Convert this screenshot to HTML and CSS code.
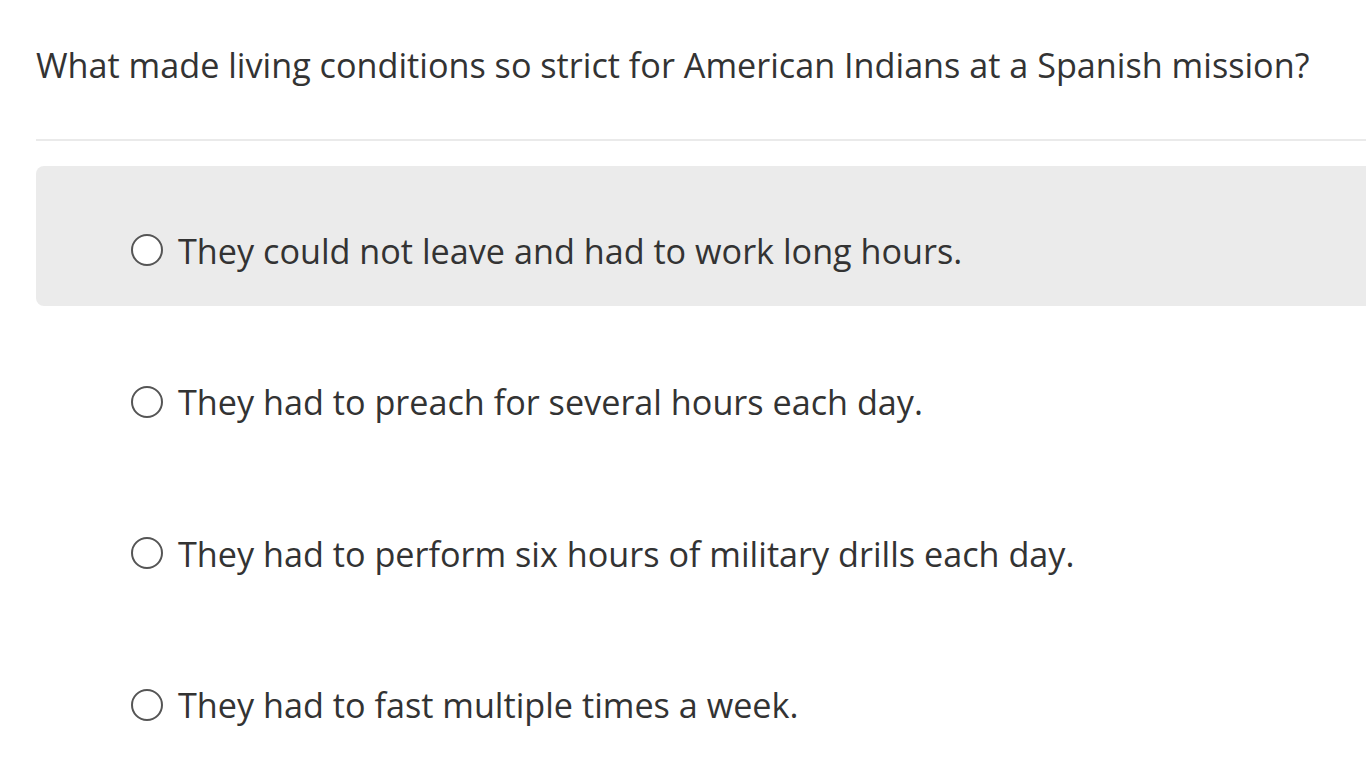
FILE: index.html
```html
<!DOCTYPE html>
<html>
<head>
<meta charset="utf-8">
<link rel="stylesheet" href="styles.css">
</head>
<body>
<div class="page">
  <div class="question">What made living conditions so strict for American Indians at a Spanish mission?</div>
  <div class="options">
    <label class="option active"><span class="radio"></span><span class="text">They could not leave and had to work long hours.</span></label>
    <label class="option"><span class="radio"></span><span class="text">They had to preach for several hours each day.</span></label>
    <label class="option"><span class="radio"></span><span class="text">They had to perform six hours of military drills each day.</span></label>
    <label class="option"><span class="radio"></span><span class="text">They had to fast multiple times a week.</span></label>
  </div>
</div>
</body>
</html>
```
FILE: styles.css
```css
html, body {
  margin: 0;
  padding: 0;
  background: #ffffff;
  overflow: hidden;
}
.page {
  padding-left: 36px;
  font-family: "Open Sans", sans-serif;
  color: #333333;
}
.question {
  font-size: 34.2px;
  line-height: 46px;
  padding-top: 42px;
  padding-bottom: 51px;
  border-bottom: 2px solid #eaeaea;
  white-space: nowrap;
}
.options {
  padding-top: 25px;
  display: flex;
  flex-direction: column;
  gap: 11.5px;
}
.option {
  height: 140px;
  box-sizing: border-box;
  display: flex;
  align-items: center;
  padding-left: 95px;
  padding-top: 28px;
  border-radius: 8px 0 0 8px;
  font-size: 34.2px;
}
.option.active {
  background: #ebebeb;
}
.radio {
  width: 28px;
  height: 28px;
  border: 2px solid #555555;
  border-radius: 50%;
  background: #ffffff;
  flex: none;
  margin-right: 15px;
}
.text {
  white-space: nowrap;
}
```
